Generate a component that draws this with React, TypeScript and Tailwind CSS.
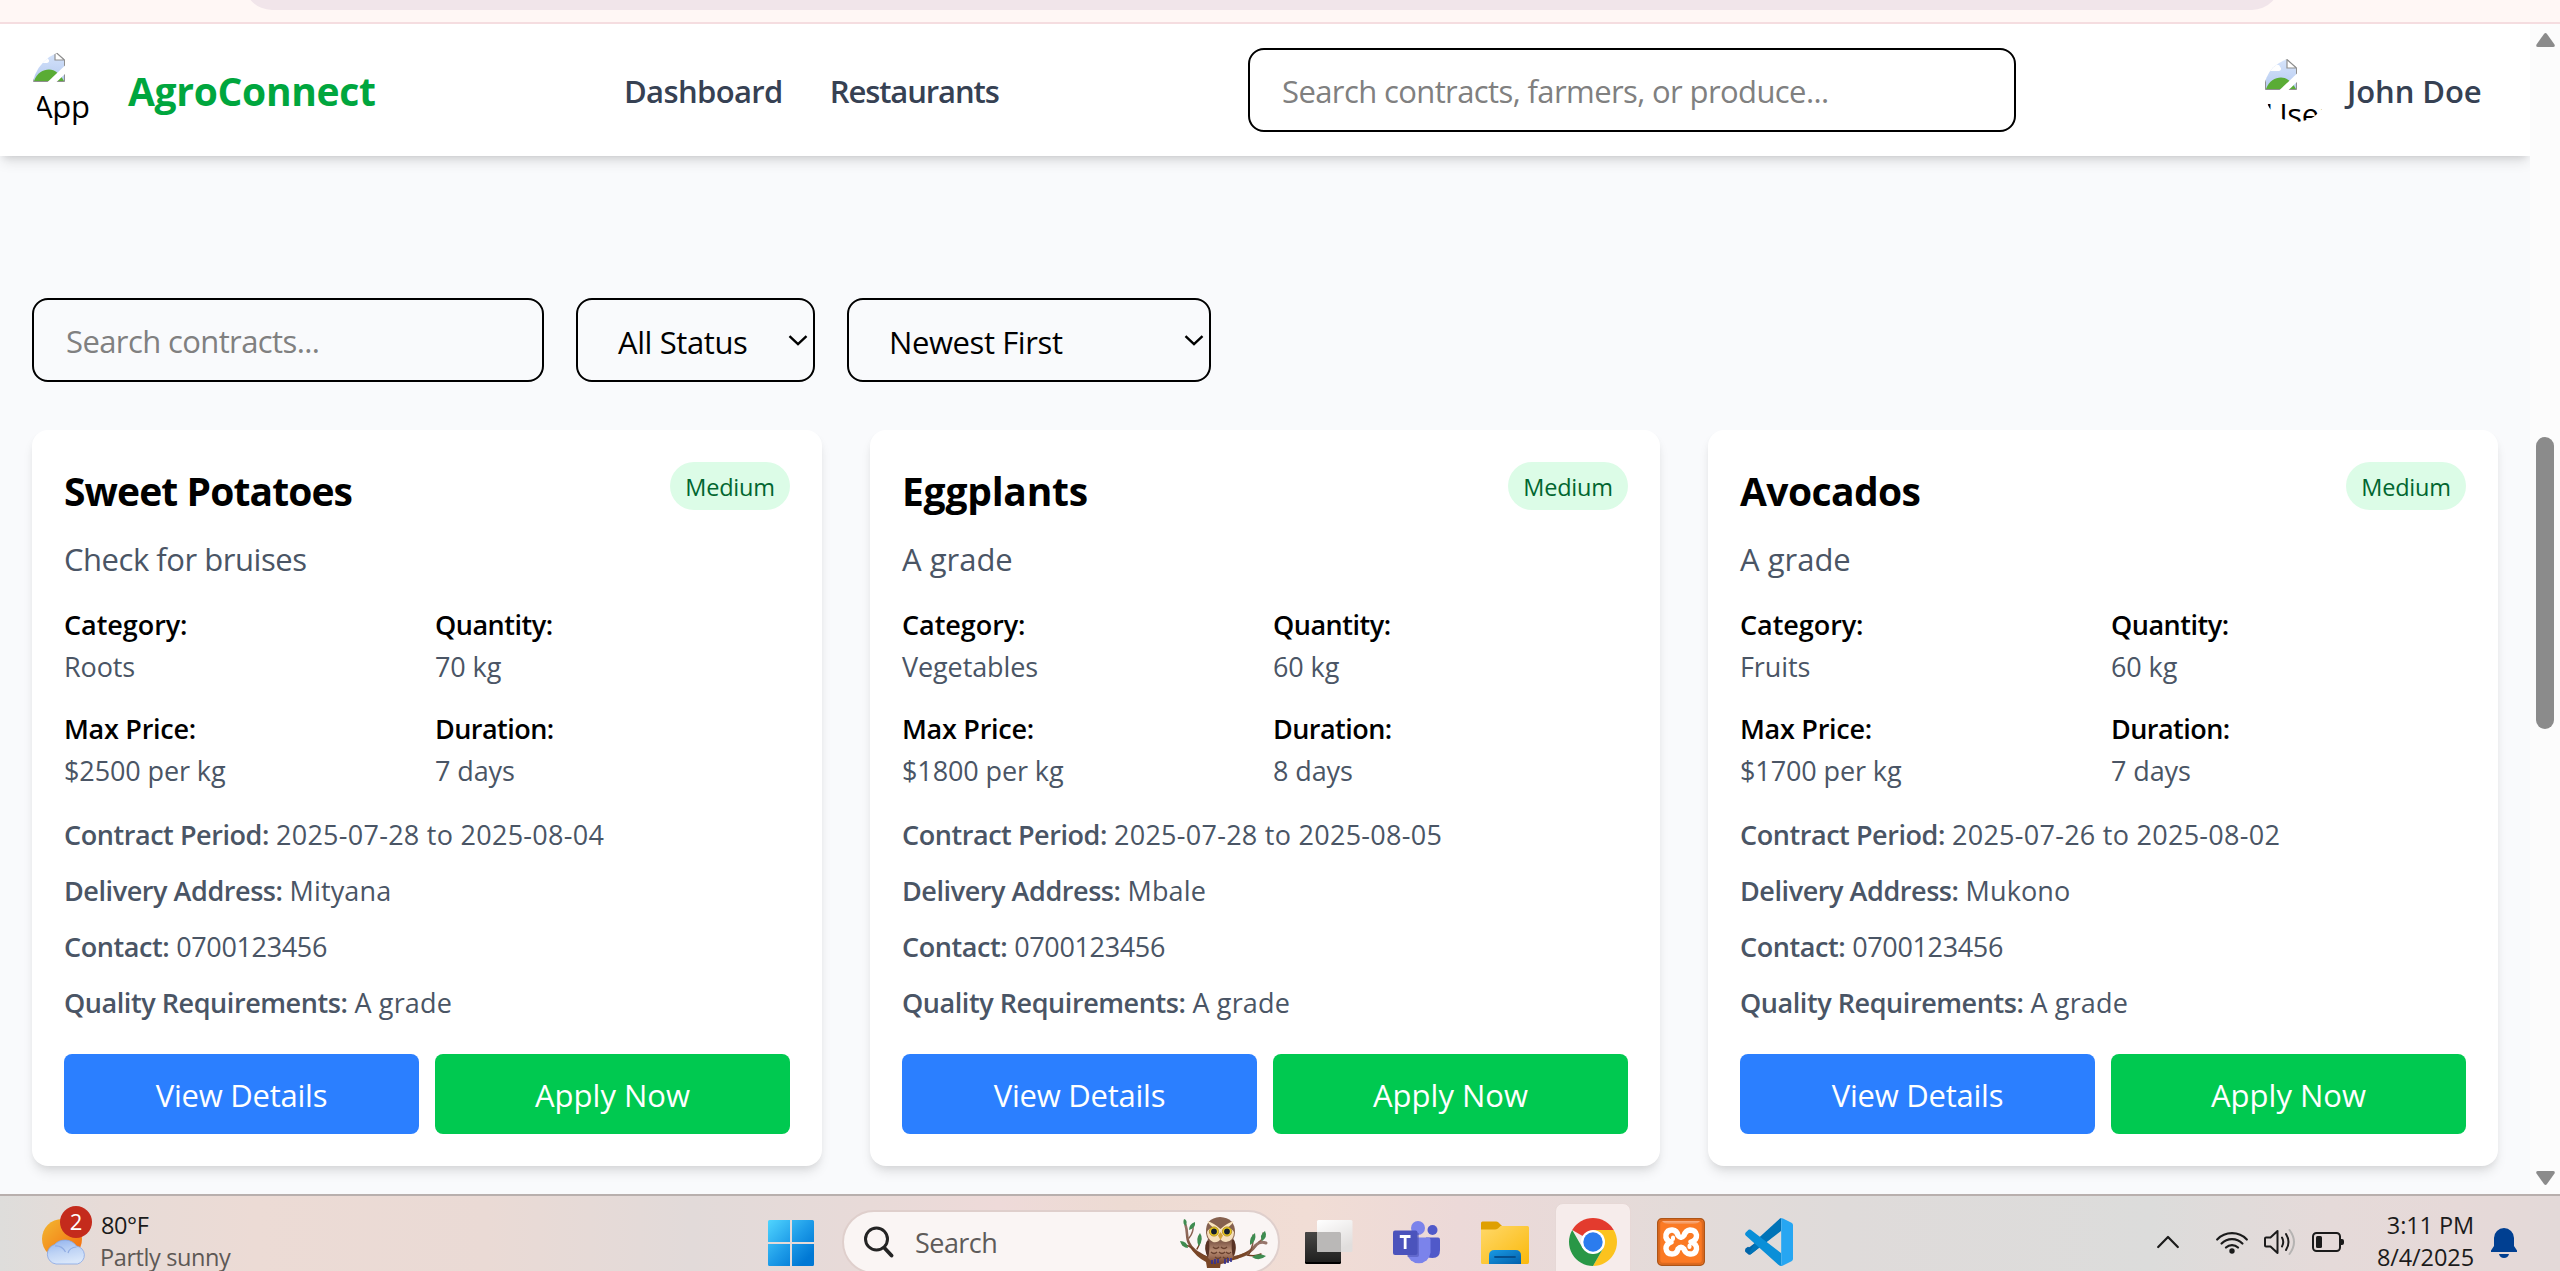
import type { ReactNode } from "react";

type Contract = {
  crop: string;
  cropTracking: string;
  description: string;
  descriptionTracking: string;
  category: string;
  quantity: string;
  price: string;
  duration: string;
  period: string;
  address: string;
};

const contracts: Contract[] = [
  {
    crop: "Sweet Potatoes",
    cropTracking: "tracking-[-0.023em]",
    description: "Check for bruises",
    descriptionTracking: "tracking-[-0.015em]",
    category: "Roots",
    quantity: "70 kg",
    price: "$2500 per kg",
    duration: "7 days",
    period: "2025-07-28 to 2025-08-04",
    address: "Mityana",
  },
  {
    crop: "Eggplants",
    cropTracking: "tracking-[-0.006em]",
    description: "A grade",
    descriptionTracking: "tracking-normal",
    category: "Vegetables",
    quantity: "60 kg",
    price: "$1800 per kg",
    duration: "8 days",
    period: "2025-07-28 to 2025-08-05",
    address: "Mbale",
  },
  {
    crop: "Avocados",
    cropTracking: "tracking-[-0.015em]",
    description: "A grade",
    descriptionTracking: "tracking-normal",
    category: "Fruits",
    quantity: "60 kg",
    price: "$1700 per kg",
    duration: "7 days",
    period: "2025-07-26 to 2025-08-02",
    address: "Mukono",
  },
];

function BrokenImage({ alt, size }: { alt: string; size: string }) {
  return (
    <div className={`relative shrink-0 overflow-hidden rounded-full ${size}`}>
      <svg className="absolute top-px left-px h-8 w-8" viewBox="0 0 32 32">
        <defs>
          <linearGradient id={`sky-${alt}`} x1="0" y1="0" x2="0" y2="1">
            <stop offset="0" stopColor="#d6e4fb" />
            <stop offset="1" stopColor="#b5caf0" />
          </linearGradient>
        </defs>
        <path d="M0.5 0.5H22L31.5 9V30.5H0.5Z" fill={`url(#sky-${alt})`} stroke="#8f8f8f" />
        <path d="M5 12c0-3 2-4 4-4 1-3 6-3 6 0 2 1 1 4-1 4z" fill="#fff" />
        <path d="M1 30C4 22 10 18.5 16 18.5S27 23 31 30Z" fill="#5aac35" />
        <path d="M22 0.5V9H31.5Z" fill="#fff" stroke="#8f8f8f" strokeWidth="1.2" />
        <path d="M13.5 32L33 13.5V22L22.5 32Z" fill="#fff" />
      </svg>
      <span className="absolute top-8 left-px text-[31px] leading-[48px] tracking-[-0.01em]">{alt}</span>
    </div>
  );
}

function SelectBox({ label, width }: { label: string; width: string }) {
  return (
    <button
      className={`flex h-[84px] items-center justify-between rounded-2xl border-2 border-black pr-[5px] pl-10 text-[31px] tracking-[-0.013em] text-black ${width}`}
    >
      <span className="pt-[5px]">{label}</span>
      <svg className="h-[11px] w-5" viewBox="0 0 20 11" fill="none" stroke="#000" strokeWidth="2.4">
        <path d="M1.5 1.2L10 9.2L18.5 1.2" />
      </svg>
    </button>
  );
}

function Fact({ label, value, tracking }: { label: string; value: string; tracking: string }) {
  return (
    <div className="leading-[42px]">
      <p className={`font-semibold text-black ${tracking}`}>{label}</p>
      <p className="tracking-[-0.004em]">{value}</p>
    </div>
  );
}

function Detail({ label, children }: { label: string; children: ReactNode }) {
  return (
    <p className="leading-[42px]">
      <span className="font-semibold tracking-[-0.016em]">{label}</span> {children}
    </p>
  );
}

function ContractCard({ c }: { c: Contract }) {
  return (
    <article className="h-[736px] rounded-2xl bg-white p-8 text-[27px] text-[#4a5565] shadow-[0_8px_12px_-2px_rgba(0,0,0,0.1),0_4px_8px_-4px_rgba(0,0,0,0.1)]">
      <div className="flex h-14 items-start justify-between">
        <h2 className={`pt-px text-[39px] leading-[56px] font-bold text-black ${c.cropTracking}`}>{c.crop}</h2>
        <span className="h-12 w-[120px] rounded-full bg-[#dcfce7] pt-px text-center text-[23.5px] leading-[48px] tracking-[-0.009em] text-[#016630]">
          Medium
        </span>
      </div>
      <p className={`mt-[17px] text-[31px] leading-[48px] ${c.descriptionTracking}`}>{c.description}</p>
      <div className="mt-[21px] grid grid-cols-2 gap-x-4 gap-y-5">
        <Fact label="Category:" value={c.category} tracking="tracking-[-0.002em]" />
        <Fact label="Quantity:" value={c.quantity} tracking="tracking-[-0.018em]" />
        <Fact label="Max Price:" value={c.price} tracking="tracking-[-0.01em]" />
        <Fact label="Duration:" value={c.duration} tracking="tracking-[-0.02em]" />
      </div>
      <div className="mt-[22px] flex flex-col gap-[14px]">
        <Detail label="Contract Period:">
          <span className="tracking-[0.01em]">{c.period}</span>
        </Detail>
        <Detail label="Delivery Address:">
          <span className="tracking-[0.005em]">{c.address}</span>
        </Detail>
        <Detail label="Contact:">
          <span className="tracking-[-0.013em]">0700123456</span>
        </Detail>
        <Detail label="Quality Requirements:">
          <span className="tracking-[0.006em]">A grade</span>
        </Detail>
      </div>
      <div className="mt-[30px] grid grid-cols-2 gap-4 text-[31px] leading-[48px] text-white">
        <button className="h-20 rounded-lg bg-[#2b7fff] pt-px tracking-[-0.008em]">View Details</button>
        <button className="h-20 rounded-lg bg-[#00c950] pt-px">Apply Now</button>
      </div>
    </article>
  );
}

function Weather() {
  return (
    <div className="flex w-[768px] items-center pl-[42px]">
      <svg className="h-[76px] w-[52px]" viewBox="42 1204 52 76">
        <defs>
          <linearGradient id="sun" x1="0" y1="0" x2="1" y2="1">
            <stop offset="0" stopColor="#f3b931" />
            <stop offset="1" stopColor="#f3660c" />
          </linearGradient>
          <linearGradient id="cloud" x1="0" y1="0" x2="0.3" y2="1">
            <stop offset="0" stopColor="#8fb1ee" />
            <stop offset="0.55" stopColor="#bed3f5" />
            <stop offset="1" stopColor="#d8e6fa" />
          </linearGradient>
        </defs>
        <circle cx="62" cy="1239" r="20" fill="url(#sun)" />
        <path
          d="M56 1264a10 10 0 0 1-1.500-19.500a13 11 0 0 1 22 1.500a9.200 9.200 0 0 1 1 18z"
          fill="url(#cloud)"
          stroke="#86a6e4"
          strokeWidth="0.800"
        />
        <path d="M55 1246q7-.5 10.500 6M76.500 1247q-7 .5-8.500 6" fill="none" stroke="#8fabe3" strokeWidth="1.200" />
        <circle cx="76" cy="1222" r="16" fill="#c42b1c" />
        <text x="76" y="1230" textAnchor="middle" fontSize="22" fill="#fff" fontFamily="Open Sans, sans-serif">
          2
        </text>
      </svg>
      <div className="mb-[2px] ml-[6px] text-[23.5px] leading-8 tracking-[-0.017em]">
        <p className="pl-px text-[#1b1b1b]">80°F</p>
        <p className="text-[#5d5855]">Partly sunny</p>
      </div>
    </div>
  );
}

function WindowsLogo() {
  return (
    <svg className="mt-[2px] h-[46px] w-[46px]" viewBox="0 0 46 46">
      <defs>
        <linearGradient id="win" gradientUnits="userSpaceOnUse" x1="0" y1="0" x2="46" y2="46">
          <stop offset="0" stopColor="#50d5ff" />
          <stop offset="0.5" stopColor="#1d9be8" />
          <stop offset="0.850" stopColor="#0078d4" />
        </linearGradient>
      </defs>
      <path
        d="M1.500 0H22V22H0V1.500Q0 0 1.500 0ZM24 0H44.500Q46 0 46 1.500V22H24ZM0 24H22V46H1.500Q0 46 0 44.500ZM24 24H46V44.500Q46 46 44.500 46H24Z"
        fill="url(#win)"
      />
    </svg>
  );
}

function Owl() {
  return (
    <svg className="h-[52px] w-[90px]" viewBox="0 0 90 52">
      <defs>
        <linearGradient id="owl-body" x1="0" y1="0" x2="0" y2="1">
          <stop offset="0" stopColor="#6a4538" />
          <stop offset="0.500" stopColor="#b98e75" />
          <stop offset="1" stopColor="#75432f" />
        </linearGradient>
        <linearGradient id="branch" x1="0" y1="0" x2="0" y2="1">
          <stop offset="0" stopColor="#97766c" />
          <stop offset="1" stopColor="#703d20" />
        </linearGradient>
      </defs>
      <g fill="none" stroke="url(#branch)" strokeLinecap="round" strokeLinejoin="round">
        <path d="M6.500 9C9 16 7 22 10 27C13 34 19 37 28 42" strokeWidth="2.600" />
        <path d="M4 29Q10 29 14 33M10 22Q15 16 14 9M18 33Q22 27 20 21" strokeWidth="1.400" />
        <path d="M30 48Q46 43 62 40Q71 37 77 29Q81 25 87 27" strokeWidth="3" />
        <path d="M70 38Q75 29 74 19M80 26Q85 23 84 17M68 39Q76 41 82 38" strokeWidth="1.500" />
      </g>
      <path d="M10 30Q20 39 28 40L50 43L72 34Q62 45 42 46L41 52H28L27 46Q17 41 10 30Z" fill="#794626" />
      <path d="M29 23Q24 31 29 42Q34 48 42 48Q52 47 56 38Q58 30 54 22Z" fill="url(#owl-body)" />
      <path d="M28 25Q24 32 29 42Q31 35 30 25ZM55 24Q59 32 54 41Q52 34 53 24Z" fill="#583224" />
      <path
        d="M34 31q3 3 6 0M42 31q3 3 6 0M32 36q3 3 6 0M40 36q3 3 6 0M47 36q3 3 5 0M36 41q3 3 6 0M44 41q3 3 5 0"
        fill="none"
        stroke="#68402f"
        strokeWidth="1.300"
      />
      <path d="M27 17Q26 2 41 1Q56 2 56 16Q56 25 48 26H34Q28 25 27 17Z" fill="#85614f" />
      <path d="M28 16Q31 9 41 14Q51 9 55 16Q55 25 47 26Q43 26 41.500 23Q39 27 34 26Q28 23 28 16Z" fill="#f5dfbb" />
      <path d="M28 5Q35 7 41.500 13Q48 7 55 5Q51 12 41.500 15Q32 12 28 5Z" fill="#f9e4bd" />
      <g stroke="#aa8717" strokeWidth="0.800">
        <circle cx="35" cy="15.500" r="4.600" fill="#edcc1e" />
        <circle cx="48" cy="15.500" r="4.600" fill="#edcc1e" />
      </g>
      <circle cx="35" cy="15.500" r="2.900" fill="#131e2c" />
      <circle cx="48" cy="15.500" r="2.900" fill="#131e2c" />
      <path d="M41.500 16L44 19.500L41.500 24L39 19.500Z" fill="#d5a538" />
      <path d="M33 44v4M36 43v5M39 43v4M46 43v5M49 42v5M52 42v4" stroke="#303096" strokeWidth="1.600" />
      <g fill="#3e8c50">
        <path d="M5 3Q9 4 7 10Q3 8 5 3Z" />
        <path d="M16 6Q17 12 10 14Q10 8 16 6Z" />
        <path d="M21 17Q25 23 20 30Q16 23 21 17Z" />
        <path d="M1 25Q8 25 9 32Q3 32 1 25Z" />
        <path d="M76 17Q78 25 71 29Q70 21 76 17Z" />
        <path d="M86 15Q89 21 83 25Q80 19 86 15Z" />
        <path d="M73 41Q79 36 87 40Q80 46 73 41Z" />
      </g>
    </svg>
  );
}

function TaskViewIcon() {
  return (
    <svg className="h-12 w-12" viewBox="0 0 48 48">
      <defs>
        <linearGradient id="tv-dark" x1="0" y1="0" x2="0" y2="1">
          <stop offset="0" stopColor="#484746" />
          <stop offset="1" stopColor="#20201f" />
        </linearGradient>
        <linearGradient id="tv-light" x1="0" y1="0" x2="0.500" y2="1">
          <stop offset="0" stopColor="#fff" />
          <stop offset="1" stopColor="#e1dedd" />
        </linearGradient>
      </defs>
      <rect x="0" y="14" width="36" height="32" rx="1.500" fill="#000" />
      <rect x="0" y="14" width="36" height="30" rx="1.500" fill="url(#tv-dark)" />
      <rect x="12" y="2" width="35.500" height="32" rx="1.500" fill="url(#tv-light)" />
      <path d="M12 14H34.500Q36 14 36 15.500V34H13.500Q12 34 12 32.500Z" fill="#bab8b7" />
    </svg>
  );
}

function TeamsIcon() {
  return (
    <svg className="h-12 w-12" viewBox="0 0 48 48">
      <circle cx="39.500" cy="12" r="5" fill="#5059c9" />
      <path d="M33 19.500H45Q47 19.500 47 21.500V32Q47 40 39.500 40Q33 40 31 34Z" fill="#5059c9" />
      <circle cx="25" cy="10" r="7" fill="#7b83eb" />
      <path d="M15 19.500H35Q37.500 19.500 37.500 22V34.500A11.800 11.800 0 0 1 14 34.500Z" fill="#7b83eb" />
      <path d="M25 15H26V37Q26 39 24 39H14.500L14 33V17Z" fill="#4a50b0" opacity="0.500" />
      <rect x="0" y="12.500" width="24.500" height="24.500" rx="2" fill="#4b53bc" />
      <path d="M6.800 18.500H17.500M12.150 18.500V31" stroke="#fff" strokeWidth="2.800" />
    </svg>
  );
}

function FolderIcon() {
  return (
    <svg className="h-12 w-12" viewBox="0 0 48 48">
      <defs>
        <linearGradient id="folder" x1="0" y1="0" x2="1" y2="1">
          <stop offset="0" stopColor="#ffd869" />
          <stop offset="1" stopColor="#fab90b" />
        </linearGradient>
        <linearGradient id="folder-tray" x1="0" y1="0" x2="1" y2="1">
          <stop offset="0" stopColor="#199ae4" />
          <stop offset="1" stopColor="#0260ac" />
        </linearGradient>
      </defs>
      <path d="M1.500 3.500H15Q16.500 3.500 17.500 4.500L21 8V14H0V5Q0 3.500 1.500 3.500Z" fill="#dfa000" />
      <path d="M0 11.500H14Q15.500 11.500 17 10.500L19.500 8H46.500Q48 8 48 9.500V44Q48 46 46.500 46H1.500Q0 46 0 44.500Z" fill="url(#folder)" />
      <path d="M8 46V37.500Q8 32 13.500 32H34.500Q40 32 40 37.500V46Z" fill="url(#folder-tray)" />
      <path d="M14 39H34" stroke="#054f8e" strokeWidth="1.800" strokeLinecap="round" />
    </svg>
  );
}

function ChromeIcon() {
  return (
    <svg className="h-12 w-12" viewBox="0 0 48 48">
      <path d="M24 24L3.220 12A24 24 0 0 1 44.780 12Z" fill="#e33b2e" />
      <path d="M24 12H44.780A24 24 0 0 1 24 48L34.400 30Z" fill="#fcc31e" />
      <path d="M3.220 12L13.600 30L24 36L34.400 30L24 48A24 24 0 0 1 3.220 12Z" fill="#299746" />
      <circle cx="24" cy="24" r="12" fill="#fff" />
      <circle cx="24" cy="24" r="9.700" fill="#2b7cee" />
    </svg>
  );
}

function XamppIcon() {
  return (
    <svg className="h-12 w-12" viewBox="0 0 48 48">
      <defs>
        <linearGradient id="xampp-gloss" x1="0" y1="0" x2="0" y2="1">
          <stop offset="0" stopColor="#f9b48a" />
          <stop offset="1" stopColor="#f58a45" />
        </linearGradient>
      </defs>
      <rect x="0.750" y="0.750" width="46.500" height="46.500" rx="4" fill="#fb7a24" stroke="#ad5518" strokeWidth="1.500" />
      <rect x="2.500" y="2.500" width="43" height="43" rx="3" fill="none" stroke="#dd6a1f" strokeWidth="1.500" />
      <path d="M5 3H43Q41 6 36 6H12Q7 6 5 3Z" fill="url(#xampp-gloss)" />
      <path
        d="M14 24Q8 22 9 16.500Q10.500 11.500 15.500 12Q20 12.500 21 17.500Q24 21.500 27 17.500Q28.500 12.500 33 12Q38.500 12 39.500 17Q40 22 34 24Q40 26 39.500 31Q38.500 36.500 33 36Q28 35.500 27 31Q24 27.500 21 31Q20 36 15 36Q9.500 36 9 30.500Q9 26 14 24Z"
        fill="none"
        stroke="#fff"
        strokeWidth="5.400"
        strokeLinecap="round"
        strokeLinejoin="round"
      />
      <path d="M16 19.500V21M32.500 27.500V29" stroke="#fff" strokeWidth="4" strokeLinecap="round" />
      <path d="M19 24H30" stroke="#fb7a24" strokeWidth="4" />
    </svg>
  );
}

function VsCodeIcon() {
  return (
    <svg className="h-12 w-12" viewBox="0 0 48 48">
      <path d="M36 0L10.500 24.500L5 28.800Q4 29.500 3 28.800L0.500 30.500Q-0.500 33 0.500 34L3.500 36.500Q4.500 37.200 5.500 36.500L36 12Z" fill="#0065a9" />
      <path d="M35.500 0L13 20.500L4.500 34L5.500 36.500L36 13Z" fill="#0073b7" />
      <path d="M0.700 14.500L3.500 11.800Q4.500 11 5.700 11.800L36 35V48Q34 47.500 32.500 46L0.700 17.500Q-0.500 16 0.700 14.500Z" fill="#0a8fd8" />
      <path d="M35.500 48Q37 48 38 47.500L46.500 43.300Q48 42.500 48 41V7Q48 5.500 46.500 4.700L38 0.500Q36.800 0 35.500 0Q36.200 0.800 36.200 2V46Q36.200 47.200 35.500 48Z" fill="#27a6f2" />
    </svg>
  );
}

function TrayIcons() {
  return (
    <div className="flex items-center">
      <svg className="h-[14px] w-[22px]" viewBox="0 0 22 14" fill="none" stroke="#1b1b1b" strokeWidth="2.200">
        <path d="M1.200 12L11 2L20.800 12" strokeLinecap="round" strokeLinejoin="round" />
      </svg>
      <svg className="ml-[37px] h-6 w-8" viewBox="0 0 32 24" fill="none" stroke="#1b1b1b" strokeWidth="2.200" strokeLinecap="round">
        <path d="M1.200 9.500A20.500 20.500 0 0 1 30.800 9.500M5.600 13.500A14.500 14.500 0 0 1 26.400 13.500M10 17.500A8.600 8.600 0 0 1 22 17.500" />
        <circle cx="16" cy="21" r="2.700" fill="#1b1b1b" stroke="none" />
      </svg>
      <svg className="ml-4 h-7 w-8" viewBox="0 0 32 28" fill="none" stroke="#1b1b1b" strokeWidth="2" strokeLinecap="round" strokeLinejoin="round">
        <path d="M2 9.500H6.500L13.500 3V25L6.500 18.500H2Q1 18.500 1 17.500V10.500Q1 9.500 2 9.500Z" />
        <path d="M18 9.500Q20.500 14 18 18.500M22 6Q27 14 22 22" />
        <path d="M25.500 2Q34.500 14 25.500 26" stroke="#b5b3b2" />
      </svg>
      <svg className="ml-4 h-5 w-8" viewBox="0 0 32 20">
        <rect x="1" y="1" width="27" height="18" rx="3.500" fill="none" stroke="#1b1b1b" strokeWidth="2" />
        <rect x="4" y="4" width="6" height="12" rx="1.500" fill="#1b1b1b" />
        <path d="M28 7H30Q32 7 32 9V11Q32 13 30 13H28Z" fill="#1b1b1b" />
      </svg>
      <div className="mb-[2px] w-[130px] text-right text-[23.5px] leading-8 tracking-[-0.004em] text-[#1b1b1b]">
        <p>3:11 PM</p>
        <p>8/4/2025</p>
      </div>
      <svg className="mt-px ml-[17px] h-[30px] w-[26px]" viewBox="0 0 26 30" fill="#003f91">
        <path d="M13 0A10 10 0 0 1 23 10V18L26 22.500V24H0V22.500L3 18V10A10 10 0 0 1 13 0Z" />
        <path d="M8 26H18Q17 30 13 30T8 26Z" />
      </svg>
    </div>
  );
}

function Taskbar() {
  return (
    <footer className="h-[77px] overflow-hidden border-t-2 border-[#b8afad] bg-[linear-gradient(90deg,#dedddb_0%,#e7dbd7_4%,#ecdbd5_10%,#eadad5_19%,#e2dad9_27%,#e8dad8_34%,#eedad9_39%,#eddbd3_44%,#f1ddd5_51%,#ecd9d8_57%,#e3dbd9_66%,#dfdbda_72%,#dcdcdb_84%,#e5dad9_91%,#e6d9d8_96%,#e3d9d8_100%)]">
      <div className="flex h-[92px] items-center">
        <Weather />
        <WindowsLogo />
        <div className="mr-[25px] ml-[28px] flex h-[64px] w-[438px] items-center rounded-full border-2 border-[#dfcfcc] bg-[#faf5f4] pr-[9px] pl-5 text-[27px] tracking-[-0.02em] text-[#5e5b5a]">
          <svg className="h-8 w-[30px]" viewBox="0 0 30 32" fill="none" stroke="#242424" strokeLinecap="round">
            <circle cx="12.500" cy="13" r="11" strokeWidth="3" />
            <path d="M20.500 22L27.500 29.500" strokeWidth="3.800" />
          </svg>
          <span className="ml-[21px] grow pt-[3px]">Search</span>
          <Owl />
        </div>
        <div className="flex items-center gap-10">
          <TaskViewIcon />
          <TeamsIcon />
          <FolderIcon />
          <div className="-mx-[14px] flex h-[78px] w-[76px] items-center justify-center rounded-lg border border-[#e6d8d6] bg-[#f6eceb]">
            <ChromeIcon />
          </div>
          <XamppIcon />
          <VsCodeIcon />
        </div>
        <div className="mr-[43px] ml-auto">
          <TrayIcons />
        </div>
      </div>
    </footer>
  );
}

function Scrollbar() {
  return (
    <div className="flex w-[30px] flex-col items-center bg-[#fcfcfc] pt-[9px] pb-[9px]">
      <svg className="h-[14px] w-[19px]" viewBox="0 0 19 14" fill="#8b8b8b">
        <path d="M8 1Q9.500 -0.800 11 1L18.500 11.500Q19.500 14 17 14H2Q-0.500 14 0.500 11.500Z" />
      </svg>
      <div className="mt-[390px] h-[292px] w-[18px] rounded-full bg-[#8b8b8b]" />
      <svg className="mt-auto h-[14px] w-[19px] rotate-180" viewBox="0 0 19 14" fill="#8b8b8b">
        <path d="M8 1Q9.500 -0.800 11 1L18.500 11.500Q19.500 14 17 14H2Q-0.500 14 0.500 11.500Z" />
      </svg>
    </div>
  );
}

export default function App() {
  return (
    <div className="flex h-[1271px] w-[2560px] flex-col overflow-hidden bg-[#f9fafb] font-['Open_Sans','Noto_Sans',sans-serif] text-black">
      <div className="flex h-6 shrink-0 justify-start overflow-hidden border-b-2 border-[#f5dde0] bg-[#fff7f5]">
        <div className="-mt-[46px] ml-[244px] h-14 w-[2036px] rounded-full bg-[#f1e5ea]" />
      </div>

      <div className="flex h-[1170px] shrink-0">
        <div className="flex w-[2530px] flex-col overflow-hidden bg-[#f9fafc]">
          <header className="flex h-[132px] shrink-0 items-center bg-white pl-8 text-[31px] leading-[48px] font-semibold text-[#364153] shadow-[0_8px_12px_-2px_rgba(0,0,0,0.1),0_4px_8px_-4px_rgba(0,0,0,0.15)]">
            <div className="flex w-[592px] items-center gap-4 font-normal text-black">
              <BrokenImage alt="App" size="h-20 w-20" />
              <span className="pt-[2px] text-[39px] leading-[56px] font-bold tracking-[-0.008em] text-[#00a63e]">
                AgroConnect
              </span>
            </div>
            <nav className="flex w-[624px] gap-[47px] pt-[2px]">
              <a className="tracking-[-0.02em]">Dashboard</a>
              <a className="tracking-[-0.036em]">Restaurants</a>
            </nav>
            <input
              className="h-[84px] w-[768px] rounded-2xl border-2 border-black bg-white px-8 pt-[2px] font-normal tracking-[-0.0195em] placeholder:text-[#808080]"
              placeholder="Search contracts, farmers, or produce..."
            />
            <div className="ml-[248px] flex items-center gap-[19px]">
              <div className="font-normal text-black">
                <BrokenImage alt="User" size="h-16 w-16" />
              </div>
              <span className="pt-[2px] tracking-[-0.002em]">John Doe</span>
            </div>
          </header>

          <main className="px-8 pt-[142px]">
            <div className="flex gap-8">
              <input
                className="h-[84px] w-[512px] rounded-2xl border-2 border-black px-8 pt-[2px] text-[31px] tracking-[-0.0195em] placeholder:text-[#808080]"
                placeholder="Search contracts..."
              />
              <SelectBox label="All Status" width="w-[239px]" />
              <SelectBox label="Newest First" width="w-[364px]" />
            </div>
            <div className="mt-12 grid grid-cols-3 gap-12">
              {contracts.map((c) => (
                <ContractCard key={c.crop} c={c} />
              ))}
            </div>
          </main>
        </div>
        <Scrollbar />
      </div>

      <Taskbar />
    </div>
  );
}
